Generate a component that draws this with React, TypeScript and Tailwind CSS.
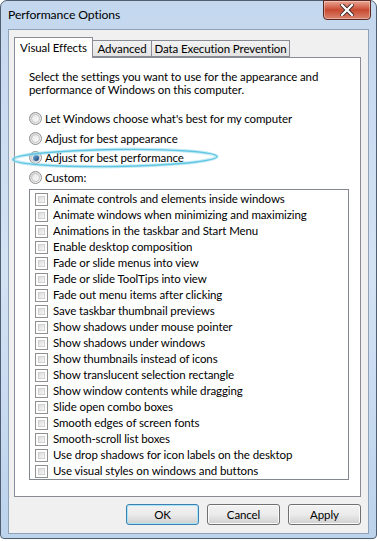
import { useState } from "react";

const effects = [
  "Animate controls and elements inside windows",
  "Animate windows when minimizing and maximizing",
  "Animations in the taskbar and Start Menu",
  "Enable desktop composition",
  "Fade or slide menus into view",
  "Fade or slide ToolTips into view",
  "Fade out menu items after clicking",
  "Save taskbar thumbnail previews",
  "Show shadows under mouse pointer",
  "Show shadows under windows",
  "Show thumbnails instead of icons",
  "Show translucent selection rectangle",
  "Show window contents while dragging",
  "Slide open combo boxes",
  "Smooth edges of screen fonts",
  "Smooth-scroll list boxes",
  "Use drop shadows for icon labels on the desktop",
  "Use visual styles on windows and buttons",
];

const modes = [
  "Let Windows choose what's best for my computer",
  "Adjust for best appearance",
  "Adjust for best performance",
  "Custom:",
];

function Radio({ on }: { on: boolean }) {
  return (
    <span className="w-[13px] h-[13px] rounded-full border border-[#8e8f8f] bg-gradient-to-br from-[#d8d8d8] to-[#f6f6f6] flex items-center justify-center shrink-0">
      <span className="w-[9px] h-[9px] rounded-full border border-[#c4c4c4] bg-gradient-to-br from-[#e6e6e6] to-[#fbfbfb] flex items-center justify-center">
        {on && <span className="w-[6px] h-[6px] rounded-full bg-gradient-to-br from-[#7bb1e0] to-[#0e3d72]" />}
      </span>
    </span>
  );
}

function Check() {
  return (
    <span className="w-[13px] h-[13px] border border-[#8e8f8f] bg-white p-[2px] shrink-0">
      <span className="block w-full h-full bg-gradient-to-br from-[#dcdcdc] to-[#f8f8f8] border border-[#d0d0d0]" />
    </span>
  );
}

function WinButton({ label, focused }: { label: string; focused?: boolean }) {
  return (
    <button
      className={`w-[73px] h-[21px] rounded-[3px] border text-black flex items-center justify-center bg-gradient-to-b from-[#f2f2f2] via-[#ebebeb] to-[#cfcfcf] ${
        focused ? "border-[#3c7fb1] shadow-[inset_0_0_0_1px_#a8e4f7]" : "border-[#707070] shadow-[inset_0_0_0_1px_#fbfbfb]"
      }`}
    >
      {label}
    </button>
  );
}

export default function App() {
  const [mode, setMode] = useState(2);

  return (
    <div
      className="w-[377px] h-[541px] bg-white relative whitespace-nowrap text-[11.5px] tracking-[-0.1px]"
      style={{ fontFamily: 'Lato, "Noto Sans", sans-serif' }}
    >
      <div className="w-[377px] h-[539px] rounded-t-[7px] rounded-b-[4px] border border-[#4f5e70] bg-gradient-to-b from-[#c3d7ee] via-[#d4e3f4] to-[#bcd3ec] flex flex-col relative">
        <div className="h-[28px] flex items-center pl-[7px] text-[12.2px] text-black shrink-0">Performance Options</div>

        {/* close button */}
        <div className="absolute top-[-1px] right-[5px] w-[48px] h-[20px] rounded-b-[4px] border border-[#5a2a22] bg-gradient-to-b from-[#e8a493] via-[#c9492f] to-[#d8846e] flex items-center justify-center shadow-[inset_0_0_0_1px_rgba(255,255,255,0.35)]">
          <svg width="14" height="12" viewBox="0 0 14 12">
            <path d="M2 1 L12 11 M12 1 L2 11" stroke="#3a2a2a" strokeWidth="4" strokeLinecap="square" />
            <path d="M2 1 L12 11 M12 1 L2 11" stroke="#ffffff" strokeWidth="2.2" strokeLinecap="square" />
          </svg>
        </div>

        <div className="mx-[7px] mb-[4px] flex-1 border border-[#8fa2b8] bg-[#f0f0f0] flex flex-col pl-[5px] pr-[7px] pt-[7px] text-black">
          {/* tabs */}
          <div className="flex items-end h-[20px] relative z-10">
            <div className="h-[21px] w-[79px] border border-b-0 border-[#898c95] bg-white flex items-center justify-center -mb-px">Visual Effects</div>
            <div className="h-[17px] w-[59px] border border-l-0 border-[#898c95] bg-gradient-to-b from-[#f2f2f2] to-[#e3e3e3] flex items-center justify-center">Advanced</div>
            <div className="h-[17px] w-[138px] border border-l-0 border-[#898c95] bg-gradient-to-b from-[#f2f2f2] to-[#e3e3e3] flex items-center justify-center">Data Execution Prevention</div>
          </div>

          {/* panel */}
          <div className="h-[440px] border border-[#898c95] bg-white pl-[14px] pr-[12px] pt-[12px] relative">
            <p className="leading-[13px]">
              Select the settings you want to use for the appearance and
              <br />
              performance of Windows on this computer.
            </p>

            <div className="mt-[13px] flex flex-col">
              {modes.map((m, i) => (
                <div key={m} className="h-[19.5px] flex items-center gap-[3px] cursor-default" onClick={() => setMode(i)}>
                  <Radio on={mode === i} />
                  <span>{m}</span>
                </div>
              ))}
            </div>

            <svg className="absolute left-[-5px] top-[88px]" width="212" height="24" viewBox="0 0 212 24">
              <ellipse cx="105" cy="12" rx="102" ry="8.5" fill="none" stroke="#9fe0f0" strokeWidth="3.5" opacity="0.6" transform="rotate(-0.8 105 12)" />
              <ellipse cx="105" cy="12" rx="102" ry="8.5" fill="none" stroke="#62c6e2" strokeWidth="1.4" transform="rotate(-0.8 105 12)" />
            </svg>

            <div className="mt-[2px] w-[320px] h-[291px] border border-[#828790] py-px pl-[5px]">
              {effects.map((e) => (
                <div key={e} className="h-[16px] flex items-center gap-[5px]">
                  <Check />
                  <span>{e}</span>
                </div>
              ))}
            </div>
          </div>

          {/* buttons */}
          <div className="flex justify-end gap-[8px] mt-[7px]">
            <WinButton label="OK" focused />
            <WinButton label="Cancel" />
            <WinButton label="Apply" />
          </div>
        </div>
      </div>
    </div>
  );
}
